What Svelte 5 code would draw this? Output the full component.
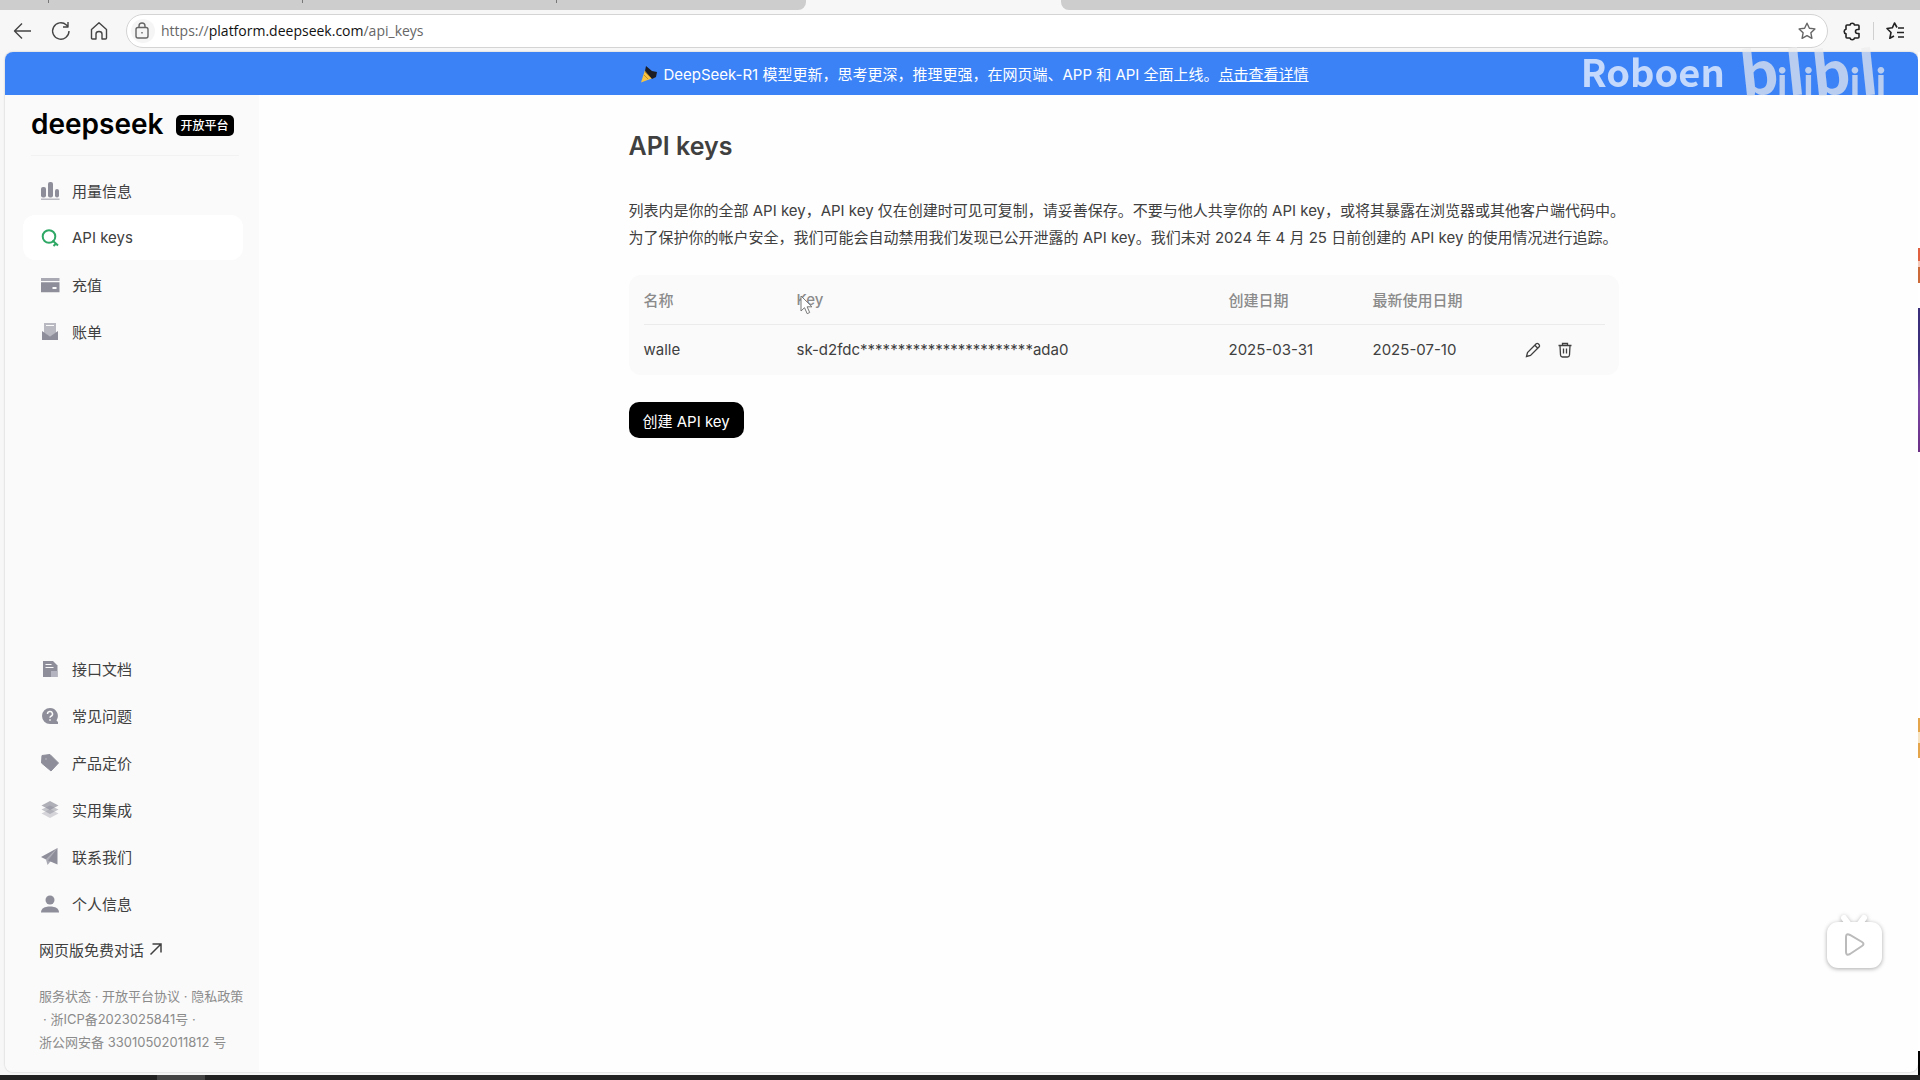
<script lang="ts">
	interface MenuItem {
		icon: string;
		label: string;
		active?: boolean;
	}

	const mainMenu: MenuItem[] = [
		{ icon: 'usage', label: '用量信息' },
		{ icon: 'key', label: 'API keys', active: true },
		{ icon: 'card', label: '充值' },
		{ icon: 'bill', label: '账单' }
	];

	const helpMenu: MenuItem[] = [
		{ icon: 'docs', label: '接口文档' },
		{ icon: 'faq', label: '常见问题' },
		{ icon: 'price', label: '产品定价' },
		{ icon: 'stack', label: '实用集成' },
		{ icon: 'contact', label: '联系我们' },
		{ icon: 'user', label: '个人信息' }
	];

	const keys = [
		{
			name: 'walle',
			key: 'sk-d2fdc***********************ada0',
			created: '2025-03-31',
			used: '2025-07-10'
		}
	];

	let url = $state('https://platform.deepseek.com/api_keys');
</script>

{#snippet icon(name: string)}
	<svg class="icon" viewBox="0 0 20 20" aria-hidden="true">
		{#if name === 'usage'}
			<rect x="1" y="6" width="5" height="10.5" rx="2" />
			<rect x="8" y="1" width="5" height="15.5" rx="2" />
			<rect x="15" y="8" width="4" height="8.5" rx="2" />
			<rect x="1" y="17.5" width="18.5" height="1.5" opacity=".6" />
		{:else if name === 'key'}
			<g fill="none" stroke="#2fa866" stroke-width="2">
				<circle cx="9" cy="8.5" r="6.3" />
				<path d="M12.5 12.5 18 17.5M13.5 18l2.5-2.5" />
			</g>
		{:else if name === 'card'}
			<path d="M1 3h18.500v3H1z" opacity=".75" />
			<path d="M1 7.200h18.500v10H1zM12.500 12v2h4v-2z" fill-rule="evenodd" />
		{:else if name === 'bill'}
			<path d="M4 1h12v10l-6 4-6-4z" opacity=".6" />
			<path d="M6 3.500h8" stroke="#fafafa" />
			<path d="M2 9l8 5.500L18 9v9H2z" />
		{:else if name === 'docs'}
			<path d="M3 2h10l4.500 4.500V18H3z" />
			<path d="M5.500 5.500h6M5.500 8.500h8" stroke="#fafafa" stroke-width="1.2" />
			<rect x="11" y="12" width="6.5" height="6" fill="#b4b4c0" />
		{:else if name === 'faq'}
			<path d="M10 2a8 8 0 1 0 0 16h8v-2l-1.500-1.500A8 8 0 0 0 10 2z" />
			<path d="M7.500 8a2.500 2.500 0 1 1 3.500 2.200q-1 .5-1 1.600M10 13.300v1.500" fill="none" stroke="#fafafa" stroke-width="1.5" />
		{:else if name === 'price'}
			<path d="M2 2.500 10 1.500 18.500 10 11 18 1.500 10zM5 6a1 1 0 1 0 2 0 1 1 0 1 0-2 0z" fill-rule="evenodd" stroke="#8e8e9b" stroke-linejoin="round" />
		{:else if name === 'stack'}
			<path d="M10 9 1.500 13.500 10 18l8.500-4.500z" opacity=".35" />
			<path d="M10 5.500 1.500 9.500 10 14l8.500-4.500z" opacity=".5" />
			<path d="M10 1 1.500 5.500 10 10l8.500-4.500z" opacity=".7" />
		{:else if name === 'contact'}
			<path d="M17.500 1 1 10l5 2.500zM17.500 1 8 13.500l9.500 4z" />
			<path d="M17.500 1 6 12.500l1.500 5.500 3-3.500z" opacity=".75" />
		{:else if name === 'user'}
			<circle cx="10" cy="6" r="4.5" />
			<path d="M1 18.500c0-4 3.500-6 9-6s9 2 9 6z" />
		{/if}
	</svg>
{/snippet}

<div class="window">
	<div class="tab-strip">
		<div class="tabs tabs-left">
			<span></span>
			<span></span>
			<span></span>
		</div>
		<div class="tabs tabs-right"></div>
	</div>

	<header class="toolbar">
		<button class="tool" aria-label="Back">
			<svg viewBox="0 0 20 20"><path d="M19 10H2.500M10 2.500 2.500 10l7.500 7.500" /></svg>
		</button>
		<button class="tool" aria-label="Refresh">
			<svg viewBox="0 0 20 20"><path d="M19 10a8.200 8.200 0 1 1-2.600-6L18 5.500M18 1v5h-5" /></svg>
		</button>
		<button class="tool" aria-label="Home">
			<svg viewBox="0 0 20 20"><path d="M3.500 8.500 11 1.700l7.500 6.800V17q0 1-1 1H14v-5q0-2.500-3-2.500T8 13v5H4.500q-1 0-1-1z" /></svg>
		</button>
		<div class="address">
			<button class="lock" aria-label="Site information">
				<svg viewBox="0 0 20 20"><rect x="3" y="6.5" width="12" height="10.5" rx="2" /><path d="M6 6.500V5a3 3 0 0 1 6 0v1.500M9 11v1.500" /></svg>
			</button>
			<label class="url">
				<input type="text" aria-label="Address" bind:value={url} />
				<span aria-hidden="true">https://<b>platform.deepseek.com</b>/api_keys</span>
			</label>
			<button class="star" aria-label="Add to favorites">
				<svg viewBox="0 0 20 20"><path d="m10 2.200 2.400 5 5.500.7-4 3.900 1 5.500-4.900-2.700-4.900 2.700 1-5.500-4-3.900 5.500-.7z" /></svg>
			</button>
		</div>
		<div class="tools-right">
			<button class="tool" aria-label="Extensions">
				<svg class="strong" viewBox="0 0 20 20"><path d="M5 4h3a2.300 2.300 0 0 1 4.500 0H16q1 0 1 1v3.500h-1.500a2 2 0 0 0 0 4H17V16q0 1-1 1h-3.500a2.300 2.300 0 0 1-4.500 0H5q-1 0-1-1v-3.200a2.300 2.300 0 0 1 0-4.500V5q0-1 1-1z" /></svg>
			</button>
			<span class="separator"></span>
			<button class="tool" aria-label="Favorites">
				<svg class="strong" viewBox="0 0 20 20"><path d="M12 6.500 9.500 2 7.300 6.800 2 7.500l4 4L4.800 17.300 9 15M13 7h6M12 11.500h7M13 16h6" /></svg>
			</button>
		</div>
	</header>

	<div class="page">
		<div class="banner">
			<svg class="party" viewBox="0 0 18 18" aria-hidden="true">
				<path d="M5 5 13 13 1 17.500z" fill="#f6c445" />
				<path d="M6 1l6 5 5 1-1 5-4 2-7-8z" fill="#1d1d26" />
				<path d="m5 7 6 6M4 10l4 4" stroke="#c98a1e" />
			</svg>
			<span>DeepSeek-R1 模型更新，思考更深，推理更强，在网页端、APP 和 API 全面上线。<a href="#news">点击查看详情</a></span>
		</div>

		<div class="body">
			<aside class="sidebar">
				<div class="brand">
					<span class="logo">deepseek</span>
					<span class="badge">开放平台</span>
				</div>

				<nav class="menu">
					{#each mainMenu as item}
						<a href="#{item.icon}" class="menu-item" class:active={item.active}>
							{@render icon(item.icon)}
							{item.label}
						</a>
					{/each}
				</nav>

				<nav class="menu menu-bottom">
					{#each helpMenu as item}
						<a href="#{item.icon}" class="menu-item">
							{@render icon(item.icon)}
							{item.label}
						</a>
					{/each}
				</nav>

				<a href="#chat" class="chat-link">
					网页版免费对话
					<svg viewBox="0 0 14 14" aria-hidden="true"><path d="M1.500 12.500 12 2M3.500 2H12v8.500" /></svg>
				</a>

				<div class="legal">
					<div><a href="#status">服务状态</a> · <a href="#terms">开放平台协议</a> · <a href="#privacy">隐私政策</a></div>
					<div class="icp">· <a href="#icp">浙ICP备2023025841号</a> ·</div>
					<div><a href="#police">浙公网安备 33010502011812 号</a></div>
				</div>
			</aside>

			<main class="content">
				<div class="container">
					<h1>API keys</h1>
					<p>
						列表内是你的全部 API key，API key 仅在创建时可见可复制，请妥善保存。不要与他人共享你的 API key，或将其暴露在浏览器或其他客户端代码中。<br />
						为了保护你的帐户安全，我们可能会自动禁用我们发现已公开泄露的 API key。我们未对 2024 年 4 月 25 日前创建的 API key 的使用情况进行追踪。
					</p>

					<div class="table-card">
						<table>
							<thead>
								<tr>
									<th class="col-name">名称</th>
									<th class="col-key">
										Key
										<svg class="cursor" viewBox="0 0 14 20" aria-hidden="true"><path d="M1 1v15l3.500-3.300 2.700 6 2.500-1.200-2.600-5.700H12z" /></svg>
									</th>
									<th class="col-created">创建日期</th>
									<th class="col-used">最新使用日期</th>
									<th class="col-actions"></th>
								</tr>
							</thead>
							<tbody>
								{#each keys as row}
									<tr>
										<td>{row.name}</td>
										<td>{row.key}</td>
										<td>{row.created}</td>
										<td>{row.used}</td>
										<td>
											<div class="actions">
												<button aria-label="Edit">
													<svg viewBox="0 0 16 16"><path d="M1.500 14.500 2.500 10.500 11.200 1.800q1-.8 2 0l1 1q.8 1 0 2L5.500 13.500zM9.800 3.200l3 3" /></svg>
												</button>
												<button aria-label="Delete">
													<svg viewBox="0 0 16 16"><path d="M1.500 3.500h13M5.500 3.500v-2h5v2M3 3.500l.5 9.500q.2 2 2 2h5q1.800 0 2-2l.5-9.500M6.500 6.500v5M9.500 6.500v5" /></svg>
												</button>
											</div>
										</td>
									</tr>
								{/each}
							</tbody>
						</table>
					</div>

					<button class="create-btn">创建 API key</button>
				</div>
			</main>
		</div>
	</div>

	<div class="taskbar"><span></span></div>

	<!-- sliver of the window behind -->
	<div class="behind">
		<i class="orange"></i>
		<i class="purple"></i>
		<i class="yellow"></i>
		<i class="black"></i>
	</div>

	<div class="watermark">
		<span>Roboen</span>
		<span class="bili"><b>b</b>i<b>l</b>i<b>b</b>i<b>l</b>i</span>
	</div>

	<button class="player" aria-label="Play">
		<svg viewBox="0 0 64 60">
			<path class="antenna" d="m22 6 6 8M42 6l-6 8" />
			<rect class="tv" x="5" y="10" width="55" height="46" rx="11" />
			<path class="play" d="M24 25q0-4 4-2l12 7q3 2 0 4l-12 8q-4 2-4-2z" />
		</svg>
	</button>
</div>

<style>
	:global(body) {
		margin: 0;
		background: #f7f7f7;
		font-family: Inter, 'Noto Sans CJK SC', sans-serif;
		color: #404040;
	}

	button {
		padding: 0;
		border: none;
		background: none;
		font-family: inherit;
		cursor: pointer;
	}

	a {
		color: inherit;
		text-decoration: none;
	}

	.window {
		position: relative;
		display: flex;
		flex-direction: column;
		min-height: 100vh;
		overflow: hidden;
	}

	.tab-strip {
		display: flex;
		gap: 255px;
		height: 10px;
	}

	.tabs {
		display: flex;
		background: #cdcdcd;
	}

	.tabs-left {
		width: 42%;
		border-bottom-right-radius: 8px;
	}

	.tabs-right {
		flex: 1;
		border-bottom-left-radius: 8px;
	}

	.tabs span {
		width: 253px;
		height: 3px;
		border-right: 1px solid #777;
	}

	.tabs span:first-child {
		width: 48px;
	}

	.toolbar {
		display: flex;
		align-items: center;
		height: 42px;
		padding: 0 15px 0 12px;
		gap: 18px;
	}

	.tools-right {
		display: flex;
		align-items: center;
		gap: 11px;
		margin-left: -4px;
	}

	.tool {
		flex: none;
		width: 20px;
		height: 20px;
	}

	.toolbar svg {
		display: block;
		width: 20px;
		height: 20px;
		fill: none;
		stroke: #444;
		stroke-width: 1.4;
		stroke-linejoin: round;
	}

	.toolbar svg.strong {
		stroke: #222;
		stroke-width: 1.6;
	}

	.address {
		display: flex;
		flex: 1;
		align-items: center;
		height: 32px;
		padding: 0 10px 0 4px;
		border: 1px solid #d4d4d4;
		border-radius: 17px;
		background: #fff;
	}

	.lock {
		display: flex;
		align-items: center;
		justify-content: center;
		width: 24px;
		height: 24px;
		border-radius: 50%;
		background: #f5f5f5;
	}

	.toolbar .lock svg,
	.toolbar .star svg {
		stroke: #666;
	}

	.url {
		display: grid;
		flex: 1;
		margin-left: 6px;
		font-family: 'Open Sans', sans-serif;
		font-size: 14px;
		line-height: 24px;
		color: #666;
	}

	.url input,
	.url span {
		grid-area: 1 / 1;
	}

	/* the span paints the url with the domain highlighted */
	.url input {
		padding: 0;
		border: none;
		outline: none;
		background: none;
		font: inherit;
		color: transparent;
	}

	.url span {
		pointer-events: none;
	}

	.url b {
		font-weight: 400;
		color: #111;
	}

	.separator {
		width: 1px;
		height: 18px;
		background: #d0d0d0;
	}

	.page {
		display: flex;
		flex: 1;
		flex-direction: column;
		margin: 0 2px 3px 5px;
		border-radius: 8px;
		background: #fefefe;
		box-shadow: 0 0 2px #bbb;
		overflow: hidden;
	}

	.banner {
		display: flex;
		align-items: center;
		justify-content: center;
		gap: 5px;
		height: 43px;
		padding-left: 26px;
		background: #3b82f6;
		color: #fff;
		font-size: 15px;
	}

	.banner a {
		text-decoration: underline;
	}

	.party {
		width: 18px;
		height: 18px;
	}

	.body {
		display: flex;
		flex: 1;
	}

	.sidebar {
		display: flex;
		flex-direction: column;
		flex: none;
		box-sizing: border-box;
		width: 254px;
		padding: 0 16px 18px 18px;
		background: #fafafa;
	}

	.brand {
		display: flex;
		align-items: center;
		gap: 12px;
		height: 60px;
		margin: 0 4px 12px 8px;
		border-bottom: 1px solid #f2f2f2;
	}

	.logo {
		padding-bottom: 2px;
		font-size: 28px;
		font-weight: 600;
		line-height: 32px;
		color: #000;
	}

	.badge {
		padding: 0 5px;
		border-radius: 5px;
		background: #000;
		color: #fff;
		font-size: 12px;
		font-weight: 500;
		line-height: 21px;
	}

	.menu {
		display: flex;
		flex-direction: column;
		gap: 2px;
	}

	.menu-item {
		display: flex;
		align-items: center;
		gap: 12px;
		height: 45px;
		padding-left: 17px;
		border-radius: 12px;
		font-size: 15px;
	}

	.menu-item.active {
		background: #fff;
	}

	.icon {
		width: 20px;
		height: 20px;
		fill: #8e8e9b;
	}

	.menu-bottom {
		margin-top: auto;
	}

	.chat-link {
		display: flex;
		align-items: center;
		gap: 5px;
		height: 46px;
		margin-left: 16px;
		font-size: 15px;
	}

	.chat-link svg {
		width: 14px;
		height: 14px;
		fill: none;
		stroke: #404040;
		stroke-width: 1.5;
	}

	.legal {
		margin: 13px 0 0 16px;
		font-size: 13px;
		line-height: 23px;
		color: #8b8b8b;
		white-space: nowrap;
	}

	.icp {
		padding-left: 4px;
	}

	.content {
		flex: 1;
		padding: 32px 24px 32px 94px;
	}

	.container {
		max-width: 990px;
		margin: 0 auto;
	}

	h1 {
		margin: 0 0 32px;
		font-size: 25px;
		font-weight: 600;
		line-height: 38px;
	}

	p {
		margin: 0 0 24px;
		font-size: 15px;
		line-height: 27px;
		white-space: nowrap;
	}

	.table-card {
		padding: 0 14px 1px 15px;
		border-radius: 12px;
		background: #fafafa;
	}

	table {
		width: 100%;
		border-collapse: collapse;
		table-layout: fixed;
		font-size: 15px;
	}

	th,
	td {
		height: 49px;
		padding: 0;
		text-align: left;
	}

	th {
		position: relative;
		border-bottom: 1px solid #ebebeb;
		font-weight: 500;
		color: #8b8b8b;
	}

	.col-name {
		width: 153px;
	}

	.col-created {
		width: 144px;
	}

	.col-used {
		width: 152px;
	}

	.col-actions {
		width: 80px;
	}

	.cursor {
		position: absolute;
		top: 20px;
		left: 3px;
		width: 14px;
		height: 20px;
		fill: #fff;
		stroke: #777;
	}

	.actions {
		display: flex;
		gap: 16px;
	}

	.actions svg {
		display: block;
		width: 16px;
		height: 16px;
		fill: none;
		stroke: #404040;
		stroke-width: 1.3;
	}

	.create-btn {
		height: 36px;
		margin-top: 27px;
		padding: 0 14px;
		border-radius: 10px;
		background: #000;
		color: #fff;
		font-size: 15px;
	}

	.taskbar {
		height: 5px;
		background: #222;
	}

	.taskbar span {
		display: block;
		width: 48px;
		height: 5px;
		margin-left: 157px;
		background: #444;
	}

	.behind {
		position: absolute;
		top: 52px;
		right: 0;
		bottom: 5px;
		width: 2px;
		background: #fff;
	}

	.behind i {
		position: absolute;
		width: 2px;
	}

	.orange {
		top: 196px;
		height: 35px;
		background: linear-gradient(#e0603f 38%, #f3c9bb 38% 54%, #cc6a3a 54%);
	}

	.purple {
		top: 256px;
		height: 144px;
		background: linear-gradient(#3b2f7c 30%, #7d4aa8 60%, #6b2f86);
	}

	.yellow {
		top: 666px;
		height: 40px;
		background: linear-gradient(#e5a54a 36%, #f8e3c0 36% 62%, #e5a54a 62%);
	}

	.black {
		bottom: 0;
		height: 24px;
		background: #000;
	}

	.watermark {
		position: absolute;
		top: 28px;
		right: 34px;
		display: flex;
		align-items: center;
		gap: 16px;
		height: 86px;
		color: #fff;
		font-family: 'Noto Sans CJK SC', sans-serif;
		font-size: 38px;
		font-weight: 700;
		line-height: 46px;
		opacity: 0.7;
		pointer-events: none;
	}

	.bili {
		padding-top: 8px;
		font-family: Lato, sans-serif;
		font-weight: 900;
		line-height: 64px;
		color: #eee;
	}

	.bili b {
		display: inline-block;
		font-size: 64px;
		transform: rotate(-6deg);
	}

	.player {
		position: absolute;
		right: 34px;
		bottom: 108px;
		width: 64px;
		height: 60px;
	}

	.player svg {
		display: block;
		filter: drop-shadow(0 1px 2px #aaa);
	}

	.antenna {
		stroke: #fff;
		stroke-width: 6;
		stroke-linecap: round;
	}

	.tv {
		fill: #fff;
	}

	.play {
		fill: #fff;
		stroke: #bbb;
		stroke-width: 2;
	}
</style>
